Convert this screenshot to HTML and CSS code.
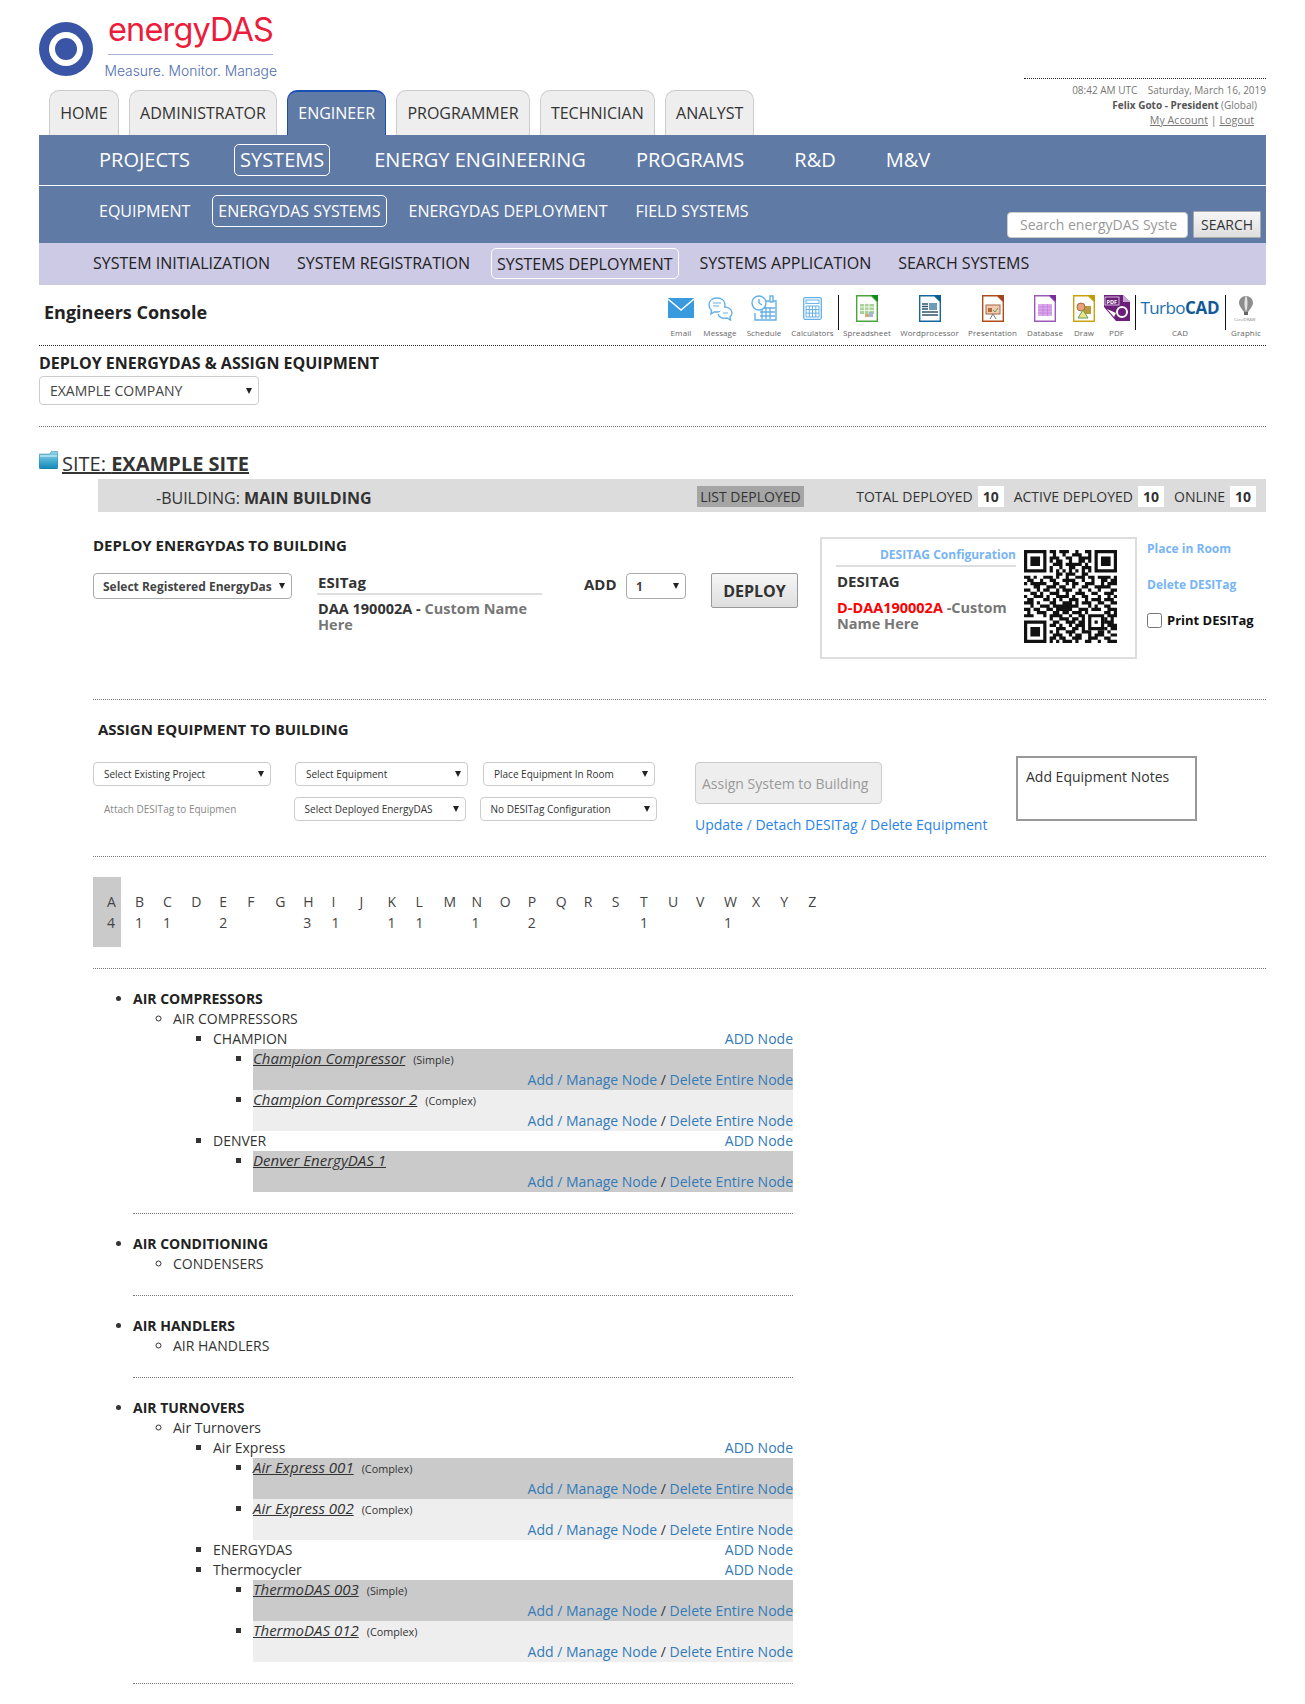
FILE: index.html
```html
<!DOCTYPE html>
<html lang="en">
<head>
<meta charset="utf-8">
<title>energyDAS - Deploy</title>
<link rel="stylesheet" href="styles.css">
</head>
<body>
<div class="page">
  <header class="header">
    <div class="header-left">
      <div class="logo">
        <svg class="logo-mark" width="54" height="54" viewBox="0 0 54 54"><circle cx="27" cy="27" r="27" fill="#3a55a5"/><circle cx="27" cy="27" r="17" fill="#fff"/><circle cx="27" cy="27" r="11" fill="#3a55a5"/></svg>
        <div class="logo-text">
          <div class="brand">energyDAS</div>
          <div class="tagline">Measure. Monitor. Manage</div>
        </div>
      </div>
      <nav class="tabs">
        <a class="tab">HOME</a>
        <a class="tab">ADMINISTRATOR</a>
        <a class="tab tab-active">ENGINEER</a>
        <a class="tab">PROGRAMMER</a>
        <a class="tab">TECHNICIAN</a>
        <a class="tab">ANALYST</a>
      </nav>
    </div>
    <div class="user">
      <div>08:42 AM UTC &nbsp;&nbsp; Saturday, March 16, 2019</div>
      <div class="user-name"><b>Felix Goto - President</b> (Global)</div>
      <div class="user-links"><a>My Account</a> | <a>Logout</a></div>
    </div>
  </header>

  <nav class="nav nav-one">
    <a class="nav-item">PROJECTS</a>
    <a class="nav-item nav-on">SYSTEMS</a>
    <a class="nav-item">ENERGY ENGINEERING</a>
    <a class="nav-item">PROGRAMS</a>
    <a class="nav-item">R&amp;D</a>
    <a class="nav-item">M&amp;V</a>
  </nav>
  <nav class="nav nav-two">
    <a class="nav-item">EQUIPMENT</a>
    <a class="nav-item nav-on">ENERGYDAS SYSTEMS</a>
    <a class="nav-item">ENERGYDAS DEPLOYMENT</a>
    <a class="nav-item">FIELD SYSTEMS</a>
    <div class="search">
      <input class="search-input" type="text" placeholder="Search energyDAS Syste">
      <button class="search-btn">SEARCH</button>
    </div>
  </nav>
  <nav class="nav nav-three">
    <a class="nav-item">SYSTEM INITIALIZATION</a>
    <a class="nav-item">SYSTEM REGISTRATION</a>
    <a class="nav-item nav-on">SYSTEMS DEPLOYMENT</a>
    <a class="nav-item">SYSTEMS APPLICATION</a>
    <a class="nav-item">SEARCH SYSTEMS</a>
  </nav>

  <section class="console">
    <h1 class="console-title">Engineers Console</h1>
    <div class="tools">
      <div class="tool t-email"><div class="tool-icon"><svg width="26" height="20" viewBox="0 0 26 20"><rect width="26" height="20" fill="#3a9ade"/><path d="M0 1l13 11L26 1" fill="none" stroke="#fff" stroke-width="1.4"/></svg></div><span>Email</span></div>
      <div class="tool t-message"><div class="tool-icon"><svg width="25" height="24" viewBox="0 0 25 24" fill="none" stroke="#63b0e8" stroke-width="1.4"><path d="M9 1c5 0 8 3 8 7s-3 7-8 7H6l-3 2 .5-3.5C2 12 1 10 1 8c0-4 3-7 8-7z" fill="#fff"/><path d="M5 6h8M5 9h6" stroke-width="1"/><path d="M16 10c4 0 8 2 8 6 0 2-1 3-2 4l.5 3-3.5-2c-3 1-8 0-9-4" fill="#fff"/><path d="M15 16h5" stroke-width="1"/></svg></div><span>Message</span></div>
      <div class="tool t-schedule"><div class="tool-icon"><svg width="26" height="26" viewBox="0 0 26 26" fill="none" stroke="#63b0e8" stroke-width="1.4"><path d="M2 6h23v19H4V18"/><rect x="19" y="1" width="3" height="6" fill="#fff"/><path d="M9 13h15M9 17h15M9 21h15M11 12v12M15 12v12M19 12v12" stroke-width="1.3"/><circle cx="8" cy="8" r="7" fill="#fff"/><path d="M8 4v4l3 2"/></svg></div><span>Schedule</span></div>
      <div class="tool t-calc"><div class="tool-icon"><svg width="19" height="23" viewBox="0 0 19 23" fill="none" stroke="#63b0e8" stroke-width="1.3"><rect x=".7" y=".7" width="17.6" height="21.6" rx="1.5"/><rect x="3" y="3" width="13" height="3.4" stroke-width="1"/><path d="M3 9h13v11H3zM3 12.6h13M3 16.2h13M6.3 9v11M9.5 9v11M12.8 9v11" stroke-width="1"/></svg></div><span>Calculators</span></div>
      <div class="tool-sep"></div>
      <div class="tool t-sheet"><div class="tool-icon"><svg width="22" height="27" viewBox="0 0 22 27"><path d="M.7.7h14.8l5.8 5.8v19.8H.7z" fill="#fff" stroke="#4aa53f" stroke-width="1.4"/><path d="M15 0h7v7z" fill="#0e8a16"/><path d="M4 9h14v10H4z" fill="#a8d29a"/><path d="M4 12h14M4 15.5h14M8.5 9v10M13 9v10" stroke="#fff" stroke-width=".8"/><rect x="9" y="19" width="4" height="3" fill="#d8a870"/><rect x="13" y="17" width="4" height="5" fill="#9fb8d8"/></svg></div><span>Spreadsheet</span></div>
      <div class="tool t-word"><div class="tool-icon"><svg width="22" height="27" viewBox="0 0 22 27"><path d="M.7.7h14.8l5.8 5.8v19.8H.7z" fill="#fff" stroke="#14689f" stroke-width="1.4"/><path d="M15 0h7v7z" fill="#0b5f96"/><path d="M3 9h6M3 11.5h6M3 14h6M3 17h16M3 20h16" stroke="#33556f" stroke-width="1.3"/><rect x="10" y="8" width="8" height="7" fill="#6f9ab8"/></svg></div><span>Wordprocessor</span></div>
      <div class="tool t-pres"><div class="tool-icon"><svg width="22" height="27" viewBox="0 0 22 27"><path d="M.7.7h14.8l5.8 5.8v19.8H.7z" fill="#fff" stroke="#b04c1c" stroke-width="1.4"/><path d="M15 0h7v7z" fill="#a6431a"/><rect x="4" y="10" width="14" height="9" fill="#eecdb4" stroke="#a8653e"/><rect x="6" y="13" width="4" height="4" fill="#b66838"/><path d="M11 15l2 2 3-4" stroke="#5aa05a" fill="none"/><path d="M8 24l3-5 3 5" stroke="#777" fill="none"/></svg></div><span>Presentation</span></div>
      <div class="tool t-data"><div class="tool-icon"><svg width="22" height="27" viewBox="0 0 22 27"><path d="M.7.7h14.8l5.8 5.8v19.8H.7z" fill="#fff" stroke="#9a5bb8" stroke-width="1.4"/><path d="M15 0h7v7z" fill="#7b2b9a"/><rect x="4" y="9" width="14" height="12" fill="#dba8ec"/><path d="M4 12h14M4 15h14M4 18h14M9 9v12M13.5 9v12" stroke="#c07fd8" stroke-width=".8"/></svg></div><span>Database</span></div>
      <div class="tool t-draw"><div class="tool-icon"><svg width="22" height="27" viewBox="0 0 22 27"><path d="M.7.7h14.8l5.8 5.8v19.8H.7z" fill="#fff" stroke="#c9a20e" stroke-width="1.4"/><path d="M15 0h7v7z" fill="#c49a06"/><rect x="10" y="11" width="8" height="8" fill="#b89a3a"/><circle cx="8" cy="12" r="4" fill="#e8a27a" stroke="#b0663c"/><path d="M5 23l5-8 5 8z" fill="#f2e28a" stroke="#5aa05a"/></svg></div><span>Draw</span></div>
      <div class="tool t-pdf"><div class="tool-icon"><svg width="26" height="26" viewBox="0 0 26 26"><path d="M0 0h19l7 7v19H12L0 12z" fill="#6c1f78"/><path d="M19 0l7 7h-7z" fill="#c9a8d0"/><rect x="1" y="2" width="14" height="8" fill="#6c1f78" stroke="#fff" stroke-width=".7"/><text x="2.4" y="8.6" class="pdf-mark">PDF</text><circle cx="18" cy="17" r="5" fill="none" stroke="#fff" stroke-width="2"/><path d="M3 14l7 8 2-4z" fill="#fff"/></svg></div><span>PDF</span></div>
      <div class="tool-sep"></div>
      <div class="tool t-cad"><div class="tool-icon tool-brand">Turbo<b>CAD</b></div><span>CAD</span></div>
      <div class="tool-sep tool-sep-last"></div>
      <div class="tool t-graphic"><div class="tool-icon"><svg width="26" height="27" viewBox="0 0 26 27"><path d="M13 1c4 0 7 3 7 7 0 3-3 6-5 9h-4C9 14 6 11 6 8c0-4 3-7 7-7z" fill="#8d8d8d"/><path d="M13 1c-2 2-2 12 0 16 2-4 2-14 0-16z" fill="#e2e2e2"/><rect x="11" y="17" width="4" height="3" fill="#666"/><text x="1" y="26" class="corel">CorelDRAW</text></svg></div><span>Graphic</span></div>
    </div>
  </section>

  <h2 class="page-title">DEPLOY ENERGYDAS &amp; ASSIGN EQUIPMENT</h2>
  <select class="company"><option>EXAMPLE COMPANY</option></select>
  <hr class="rule rule-company">

  <h2 class="site">
    <svg class="folder" width="19" height="18" viewBox="0 0 19 18"><defs><linearGradient id="fold" x1="0" y1="0" x2="0" y2="1"><stop offset="0" stop-color="#8fd8ec"/><stop offset="1" stop-color="#0f87b8"/></linearGradient></defs><path d="M0 5V4q0-1 1-1h10l1-2q.5-1 1.500-1H17q2 0 2 2v14q0 2-2 2H2q-2 0-2-2z" fill="url(#fold)" stroke="#2a6f8a" stroke-width=".5"/><path d="M1 5h17" stroke="#e2f6fa"/></svg>
    <a class="site-link">SITE: <b>EXAMPLE SITE</b></a>
  </h2>

  <div class="building">
    <div class="building-name">-BUILDING: <b>MAIN BUILDING</b></div>
    <a class="list-deployed">LIST DEPLOYED</a>
    <div class="stat">TOTAL DEPLOYED <b>10</b></div>
    <div class="stat">ACTIVE DEPLOYED <b>10</b></div>
    <div class="stat">ONLINE <b>10</b></div>
  </div>

  <section class="deploy">
    <div class="deploy-left">
      <h3 class="sub-title">DEPLOY ENERGYDAS TO BUILDING</h3>
      <div class="deploy-row">
        <select class="sel-reg"><option>Select Registered EnergyDas</option></select>
        <div class="esitag">
          <div class="esitag-head">ESITag</div>
          <div class="esitag-value">DAA 190002A - <span class="muted">Custom Name Here</span></div>
        </div>
        <label class="add-label">ADD</label>
        <select class="sel-add"><option>1</option></select>
        <button class="deploy-btn">DEPLOY</button>
      </div>
    </div>
    <div class="tagbox">
      <div class="tagbox-text">
        <a class="tagbox-link">DESITAG Configuration</a>
        <div class="tagbox-title">DESITAG</div>
        <div class="tagbox-value"><span class="red">D-DAA190002A</span> <span class="muted">-Custom Name Here</span></div>
      </div>
      <svg class="qr" width="93" height="93" viewBox="0 0 29 29">
        <path fill="#111" fill-rule="evenodd" d="M0 0h7v7H0zM1 1v5h5V1zM2 2h3v3H2zM22 0h7v7h-7zM23 1v5h5V1zM24 2h3v3h-3zM0 22h7v7H0zM1 23v5h5v-5zM2 24h3v3H2zM20 20h5v5h-5zM21 21v3h3v-3zM22 22h1v1h-1z"/>
        <path fill="none" stroke="#111" stroke-width="1" d="M8 .5h2M11 .5h3M16 .5h1M19 .5h2M9 1.5h1M12 1.5h1M15 1.5h3M20 1.5h1M8 2.5h3M13 2.5h2M17 2.5h4M8 3.5h1M10 3.5h2M14 3.5h1M17 3.5h2M20 3.5h1M9 4.5h3M13 4.5h5M19 4.5h1M8 5.5h1M11 5.5h1M14 5.5h2M18 5.5h3M8 6.5h1M10 6.5h1M12 6.5h1M14 6.5h1M16 6.5h1M18 6.5h1M20 6.5h1M10 7.5h2M13 7.5h3M18 7.5h2M0 8.5h2M3 8.5h1M6 8.5h3M10 8.5h1M13 8.5h1M16 8.5h3M20 8.5h2M23 8.5h4M28 8.5h1M1 9.5h2M5 9.5h1M8 9.5h2M12 9.5h4M18 9.5h1M21 9.5h1M24 9.5h2M27 9.5h2M0 10.5h1M2 10.5h4M6 10.5h1M9 10.5h2M13 10.5h1M15 10.5h2M19 10.5h3M24 10.5h1M26 10.5h3M3 11.5h2M7 11.5h3M11 11.5h2M15 11.5h1M18 11.5h2M22 11.5h3M25 11.5h2M0 12.5h2M4 12.5h1M6 12.5h2M10 12.5h1M12 12.5h3M17 12.5h1M20 12.5h1M23 12.5h1M27 12.5h2M2 13.5h2M5 13.5h1M8 13.5h3M13 13.5h1M16 13.5h3M21 13.5h2M25 13.5h3M0 14.5h1M3 14.5h3M7 14.5h1M10 14.5h4M15 14.5h1M18 14.5h2M23 14.5h1M26 14.5h1M28 14.5h1M1 15.5h2M6 15.5h2M9 15.5h1M11 15.5h1M14 15.5h3M19 15.5h1M21 15.5h3M25 15.5h3M0 16.5h3M4 16.5h1M8 16.5h2M12 16.5h3M16 16.5h1M18 16.5h3M23 16.5h2M27 16.5h2M2 17.5h1M5 17.5h3M9 17.5h6M15 17.5h2M20 17.5h1M22 17.5h1M25 17.5h2M0 18.5h2M3 18.5h2M7 18.5h2M10 18.5h5M17 18.5h3M21 18.5h3M26 18.5h3M1 19.5h1M4 19.5h3M9 19.5h2M12 19.5h2M15 19.5h3M19 19.5h1M25 19.5h2M28 19.5h1M0 20.5h3M6 20.5h1M8 20.5h4M14 20.5h1M17 20.5h2M26 20.5h3M8 21.5h1M11 21.5h3M15 21.5h2M18 21.5h1M25 21.5h1M27 21.5h1M9 22.5h2M13 22.5h3M17 22.5h2M25 22.5h3M8 23.5h2M11 23.5h1M14 23.5h1M16 23.5h3M26 23.5h3M10 24.5h3M15 24.5h2M18 24.5h1M25 24.5h1M27 24.5h2M8 25.5h1M10 25.5h1M13 25.5h3M18 25.5h3M23 25.5h2M26 25.5h1M9 26.5h3M14 26.5h1M16 26.5h2M20 26.5h1M22 26.5h3M27 26.5h2M8 27.5h2M11 27.5h2M15 27.5h3M20 27.5h3M25 27.5h2M8 28.5h1M10 28.5h1M12 28.5h3M16 28.5h1M19 28.5h2M23 28.5h1M26 28.5h3"/>
      </svg>
    </div>
    <div class="tag-actions">
      <a class="tag-action">Place in Room</a>
      <a class="tag-action">Delete DESITag</a>
      <label class="print"><input class="print-box" type="checkbox"> Print DESITag</label>
    </div>
  </section>

  <hr class="rule rule-inset rule-after-deploy">

  <section class="assign">
    <h3 class="sub-title assign-title">ASSIGN EQUIPMENT TO BUILDING</h3>
    <div class="assign-body">
      <div class="assign-selects">
        <div class="assign-row">
          <select class="small-sel s-project"><option>Select Existing Project</option></select>
          <select class="small-sel s-equip"><option>Select Equipment</option></select>
          <select class="small-sel s-room"><option>Place Equipment In Room</option></select>
        </div>
        <div class="assign-row assign-row-two">
          <span class="attach">Attach DESITag to Equipmen</span>
          <select class="small-sel s-deployed"><option>Select Deployed EnergyDAS</option></select>
          <select class="small-sel s-config"><option>No DESITag Configuration</option></select>
        </div>
      </div>
      <div class="assign-actions">
        <button class="assign-btn">Assign System to Building</button>
        <a class="assign-link">Update / Detach DESITag / Delete Equipment</a>
      </div>
      <div class="notes">Add Equipment Notes</div>
    </div>
  </section>

  <hr class="rule rule-inset">

  <div class="letters">
    <div class="letter letter-on">A<span>4</span></div>
    <div class="letter">B<span>1</span></div>
    <div class="letter">C<span>1</span></div>
    <div class="letter">D<span></span></div>
    <div class="letter">E<span>2</span></div>
    <div class="letter">F<span></span></div>
    <div class="letter">G<span></span></div>
    <div class="letter">H<span>3</span></div>
    <div class="letter">I<span>1</span></div>
    <div class="letter">J<span></span></div>
    <div class="letter">K<span>1</span></div>
    <div class="letter">L<span>1</span></div>
    <div class="letter">M<span></span></div>
    <div class="letter">N<span>1</span></div>
    <div class="letter">O<span></span></div>
    <div class="letter">P<span>2</span></div>
    <div class="letter">Q<span></span></div>
    <div class="letter">R<span></span></div>
    <div class="letter">S<span></span></div>
    <div class="letter">T<span>1</span></div>
    <div class="letter">U<span></span></div>
    <div class="letter">V<span></span></div>
    <div class="letter">W<span>1</span></div>
    <div class="letter">X<span></span></div>
    <div class="letter">Y<span></span></div>
    <div class="letter">Z<span></span></div>
  </div>

  <hr class="rule rule-inset">

  <ul class="tree">
    <li><b>AIR COMPRESSORS</b>
      <ul>
        <li>AIR COMPRESSORS
          <ul>
            <li><div class="line"><span>CHAMPION</span><a class="link">ADD Node</a></div>
              <ul>
                <li class="node node-dark"><div class="node-head"><a class="node-name">Champion Compressor</a><small>(Simple)</small></div><div class="node-actions"><a class="link">Add / Manage Node</a> / <a class="link">Delete Entire Node</a></div></li>
                <li class="node node-light"><div class="node-head"><a class="node-name">Champion Compressor 2</a><small>(Complex)</small></div><div class="node-actions"><a class="link">Add / Manage Node</a> / <a class="link">Delete Entire Node</a></div></li>
              </ul>
            </li>
            <li><div class="line"><span>DENVER</span><a class="link">ADD Node</a></div>
              <ul>
                <li class="node node-dark"><div class="node-head"><a class="node-name">Denver EnergyDAS 1</a></div><div class="node-actions"><a class="link">Add / Manage Node</a> / <a class="link">Delete Entire Node</a></div></li>
              </ul>
            </li>
          </ul>
        </li>
      </ul>
      <hr class="rule rule-cat">
    </li>
    <li><b>AIR CONDITIONING</b>
      <ul><li>CONDENSERS</li></ul>
      <hr class="rule rule-cat">
    </li>
    <li><b>AIR HANDLERS</b>
      <ul><li>AIR HANDLERS</li></ul>
      <hr class="rule rule-cat">
    </li>
    <li><b>AIR TURNOVERS</b>
      <ul>
        <li>Air Turnovers
          <ul>
            <li><div class="line"><span>Air Express</span><a class="link">ADD Node</a></div>
              <ul>
                <li class="node node-dark"><div class="node-head"><a class="node-name">Air Express 001</a><small>(Complex)</small></div><div class="node-actions"><a class="link">Add / Manage Node</a> / <a class="link">Delete Entire Node</a></div></li>
                <li class="node node-light"><div class="node-head"><a class="node-name">Air Express 002</a><small>(Complex)</small></div><div class="node-actions"><a class="link">Add / Manage Node</a> / <a class="link">Delete Entire Node</a></div></li>
              </ul>
            </li>
            <li><div class="line"><span>ENERGYDAS</span><a class="link">ADD Node</a></div></li>
            <li><div class="line"><span>Thermocycler</span><a class="link">ADD Node</a></div>
              <ul>
                <li class="node node-dark"><div class="node-head"><a class="node-name">ThermoDAS 003</a><small>(Simple)</small></div><div class="node-actions"><a class="link">Add / Manage Node</a> / <a class="link">Delete Entire Node</a></div></li>
                <li class="node node-light"><div class="node-head"><a class="node-name">ThermoDAS 012</a><small>(Complex)</small></div><div class="node-actions"><a class="link">Add / Manage Node</a> / <a class="link">Delete Entire Node</a></div></li>
              </ul>
            </li>
          </ul>
        </li>
      </ul>
      <hr class="rule rule-cat rule-end">
    </li>
  </ul>
</div>
</body>
</html>
```

FILE: styles.css
```css
* { box-sizing: border-box; }
html, body { margin: 0; padding: 0; background: #fff; }
body { font-family: "Open Sans", sans-serif; font-size: 14px; line-height: 20px; color: #333; }
.page { width: 1305px; padding: 0 39px; }
h1, h2, h3 { margin: 0; }
select {
  appearance: none;
  -webkit-appearance: none;
  background-color: #fff;
  background-image: url("data:image/svg+xml,%3Csvg xmlns='http://www.w3.org/2000/svg' width='6' height='6'%3E%3Cpath d='M0 0h6L3 6z' fill='%23222'/%3E%3C/svg%3E");
  background-repeat: no-repeat;
  background-position: right 6px center;
}

/* header */
.header { display: flex; justify-content: space-between; height: 135px; }
.logo { display: flex; height: 90px; padding-top: 22px; }
.logo-mark { flex: none; }
.logo-text { margin-left: 12px; margin-top: -12px; width: 172px; }
.brand { font-family: Inter, sans-serif; font-weight: 400; font-size: 32.5px; line-height: 40px; height: 45px; color: #ec1c3c; border-bottom: 1px solid #a9b3d6; margin-left: 3px; width: 165px; white-space: nowrap; letter-spacing: -.85px; }
.tagline { font-family: Inter, sans-serif; font-weight: 300; font-size: 13.85px; line-height: 20px; margin-top: 6px; margin-left: -.5px; color: #4f6db0; white-space: nowrap; }
.tabs { display: flex; gap: 10px; height: 45px; margin-left: 10px; }
.tab { display: block; padding: 0 10.2px; border: 1px solid #ccc; border-bottom: 0; border-radius: 10px 10px 0 0; background: #eee; font-size: 16px; line-height: 44px; color: #333; }
.tab-active { background: #5f7aa5; color: #fff; border-color: #1a4fb8; border-top-width: 2px; line-height: 42px; }
.user { width: 242px; height: 57px; margin-top: 78px; border-top: 1px dotted #222; padding-top: 4px; text-align: right; font-size: 10px; line-height: 15px; color: #777; }
.user-name { padding-right: 9px; }
.user-name b { color: #555; }
.user-links { padding-right: 12px; font-size: 10.7px; line-height: 14px; }
.user-links a { text-decoration: underline; }

/* nav bars */
.nav { display: flex; }
.nav-item { display: block; border: 1px solid transparent; border-radius: 5px; padding: 0 5px; white-space: nowrap; }
.nav-on { border-color: #fff; }
.nav-one { background: #5f7aa5; height: 51px; border-bottom: 1px solid #fff; padding: 9px 0 0 54px; gap: 38px; }
.nav-one .nav-item { color: #fff; font-size: 20px; line-height: 30px; height: 32px; }
.nav-two { background: #5f7aa5; height: 57px; padding: 9px 0 0 54px; gap: 16px; }
.nav-two .nav-item { color: #fff; font-size: 16px; line-height: 30px; height: 32px; }
.search { display: flex; gap: 5px; margin-left: auto; margin-right: 5px; margin-top: 16px; height: 27px; }
.search-input { width: 181px; height: 26px; margin-top: 1px; border: 1px solid #ccc; border-radius: 4px; padding: 0 0 2px 12px; font: 14px "Open Sans", sans-serif; background: #fff; }
.search-input::placeholder { color: #999; opacity: 1; }
.search-btn { width: 68px; height: 27px; border: 1px solid #aaa; border-radius: 1px; padding: 0; font: 14px "Open Sans", sans-serif; color: #333; background: linear-gradient(#f6f6f6, #dedede); }
.nav-three { background: #cdcae6; height: 42px; padding: 5px 0 0 48px; gap: 15px; }
.nav-three .nav-item { color: #222; font-size: 16px; line-height: 29px; height: 31px; }
.nav-three .nav-on { line-height: 31px; }

/* console */
.console { display: flex; height: 61px; border-bottom: 1px dotted #222; }
.console-title { font-size: 18px; font-weight: 700; line-height: 24px; color: #222; padding: 15px 0 0 5px; }
.tools { display: flex; margin-left: auto; padding-top: 10px; }
.tool { display: flex; flex-direction: column; align-items: center; font-size: 8px; line-height: 10px; color: #666; }
.tool-icon { height: 33px; }
.tool-sep { width: 1px; height: 35px; background: #111; margin: 0 .5px; flex: none; }
.tool span { white-space: nowrap; letter-spacing: .1px; }
.t-email { width: 38px; } .t-email .tool-icon { padding-top: 3px; }
.t-message { width: 40px; } .t-message .tool-icon { padding-top: 2px; }
.t-schedule { width: 48px; }
.t-calc { width: 49px; } .t-calc .tool-icon { padding-top: 2px; }
.t-sheet { width: 56px; }
.t-word { width: 69px; }
.t-pres { width: 57px; }
.t-data { width: 48px; }
.t-draw { width: 30px; }
.t-pdf { width: 35px; }
.t-cad { width: 88px; }
.t-graphic { width: 40px; }
.tool-brand { font-size: 17px; line-height: 26px; color: #1c6fae; font-weight: 400; letter-spacing: -.6px; height: 33px; }
.tool-brand b { font-weight: 700; letter-spacing: -.2px; color: #105a96; }
.pdf-mark { font: 700 5.6px "Open Sans", sans-serif; fill: #fff; }
.corel { font: 4px "Open Sans", sans-serif; fill: #888; }

/* title + company */
.page-title { font-size: 16px; font-weight: 700; line-height: 22px; color: #222; margin-top: 6px; }
.company { display: block; width: 220px; height: 29px; margin-top: 2px; padding-left: 10px; border: 1px solid #ccc; border-radius: 4px; font: 14px "Open Sans", sans-serif; color: #444; }
.rule { display: block; height: 0; margin: 0; border: 0; border-top: 1px dotted #777; }
.rule-company { margin-top: 21px; }
.rule-inset { margin-left: 54px; }
.site { display: flex; align-items: flex-start; margin-top: 24px; height: 28px; font-size: 20px; font-weight: 400; line-height: 26px; }
.folder { flex: none; margin-right: 4px; }
.site-link { text-decoration: underline; color: #333; }
.site-link b { font-weight: 700; }

/* building bar */
.building { display: flex; align-items: center; height: 33px; margin-left: 59px; padding: 2px 10px 0 58px; background: #dcdcdc; color: #333; }
.building-name { font-size: 16px; margin-top: 2px; }
.building-name b { font-weight: 700; }
.list-deployed { margin-left: auto; margin-right: 52px; padding: 0 3.5px; background: #a5a5a5; line-height: 21px; }
.stat { display: flex; align-items: center; gap: 5px; margin-left: 10px; }
.list-deployed + .stat { margin-left: 0; }
.stat b { width: 26px; height: 21px; background: #fff; text-align: center; line-height: 21px; }

/* deploy */
.deploy { display: flex; height: 187px; margin-left: 54px; padding-top: 25px; }
.deploy-left { width: 727px; flex: none; }
.sub-title { font-size: 15px; font-weight: 700; line-height: 20px; color: #222; }
.deploy-left .sub-title { margin-top: -2px; }
.deploy-row { display: flex; align-items: flex-start; margin-top: 18px; }
.sel-reg { width: 199px; height: 26px; padding-left: 9px; border: 1px solid #aaa; border-radius: 4px; font: 700 12px "Open Sans", sans-serif; color: #444; }
.esitag { width: 225px; margin-left: 25px; font-weight: 700; font-size: 14.5px; line-height: 16px; }
.esitag-head { height: 22px; border-bottom: 2px solid #ddd; padding-left: 1px; font-size: 15px; line-height: 18px; margin-bottom: 6px; }
.esitag-value { padding-left: 1px; color: #333; }
.muted { color: #777; }
.add-label { margin-left: 42px; font-weight: 700; font-size: 15px; line-height: 23px; width: 42px; color: #333; }
.sel-add { width: 60px; height: 26px; padding-left: 9px; border: 1px solid #aaa; border-radius: 4px; font: 700 12px "Open Sans", sans-serif; color: #444; }
.deploy-btn { width: 87px; height: 35px; margin-left: 25px; padding: 0; border: 1px solid #999; border-radius: 2px; background: linear-gradient(#f6f6f6, #dedede); font: 700 16px "Open Sans", sans-serif; color: #333; }
.tagbox { display: flex; width: 317px; height: 122px; border: 2px solid #ddd; padding: 7px 0 0 14px; }
.tagbox-text { width: 180px; flex: none; font-weight: 700; font-size: 14.5px; line-height: 16px; }
.tagbox-link { display: block; height: 21px; padding-top: 1px; border-bottom: 2px solid #ddd; text-align: right; font-size: 12px; color: #78b5f5; line-height: 16px; }
.tagbox-title { margin-top: 6px; color: #333; padding-left: 1px; font-size: 15px; }
.tagbox-value { margin-top: 11px; padding-left: 1px; }
.red { color: #f00; }
.qr { flex: none; margin: 4px 0 0 8px; }
.tag-actions { display: flex; flex-direction: column; margin-left: 10px; font-size: 12px; font-weight: 700; line-height: 16px; }
.tag-action { display: block; color: #78b5f5; height: 36px; padding-top: 4px; }
.tag-action + .tag-action { margin-bottom: -3px; }
.print { display: flex; align-items: center; gap: 5px; margin-top: 6px; font-size: 13px; color: #111; }
.print-box { width: 15px; height: 15px; margin: 0; }

/* assign */
.assign { height: 156px; margin-left: 54px; padding-top: 19px; }
.assign-title { padding-left: 5px; }
.assign-body { display: flex; margin-top: 23px; }
.assign-selects { width: 602px; flex: none; }
.assign-row { display: flex; align-items: center; height: 24px; }
.assign-row-two { margin-top: 11px; }
.small-sel { height: 24px; padding-left: 10px; border: 1px solid #ccc; border-radius: 4px; font: 10px "Open Sans", sans-serif; color: #333; }
.s-project { width: 178px; }
.s-equip { width: 173px; margin-left: 24px; }
.s-room { width: 172px; margin-left: 15px; }
.attach { width: 200px; padding-left: 11px; font-size: 10px; color: #888; white-space: nowrap; }
.s-deployed { width: 172px; margin-left: .6px; }
.s-config { width: 177px; margin-left: 14px; }
.assign-actions { display: flex; flex-direction: column; width: 321px; flex: none; }
.assign-btn { width: 187px; height: 42px; padding: 0 0 0 6px; border: 1px solid #ccc; border-radius: 4px; background: #eee; font: 14px "Open Sans", sans-serif; color: #999; text-align: left; }
.assign-link { margin-top: 11px; color: #2a83e6; white-space: nowrap; }
.notes { width: 181px; height: 65px; margin-top: -6px; border: 2px solid #999; padding: 9px 8px; color: #333; }

/* letters */
.letters { display: flex; height: 70px; margin: 20px 0 21px 54px; color: #444; }
.letter { width: 28.06px; padding: 15px 0 0 14px; flex: none; }
.letter span { display: block; height: 20px; margin-top: 1px; }
.letter-on { background: #cacaca; }

/* tree */
.tree { width: 700px; margin: 20px 0 0 54px; padding: 0 0 0 40px; list-style: disc; }
.tree ul { margin: 0; padding: 0 0 0 40px; }
.tree b { font-weight: 700; color: #222; }
.line { display: flex; justify-content: space-between; }
.link { color: #337ab7; }
.node { height: 41px; }
.node-dark { background: #cacaca; }
.node-light { background: #eee; }
.node-head { height: 20px; line-height: 18px; white-space: nowrap; }
.node-name { font-size: 15px; font-style: italic; text-decoration: underline; color: #333; }
.node small { font-size: 10.8px; margin-left: 8px; color: #333; }
.node-actions { text-align: right; margin-top: 1px; }
.rule-cat { margin: 21px 0 20px; }
```
